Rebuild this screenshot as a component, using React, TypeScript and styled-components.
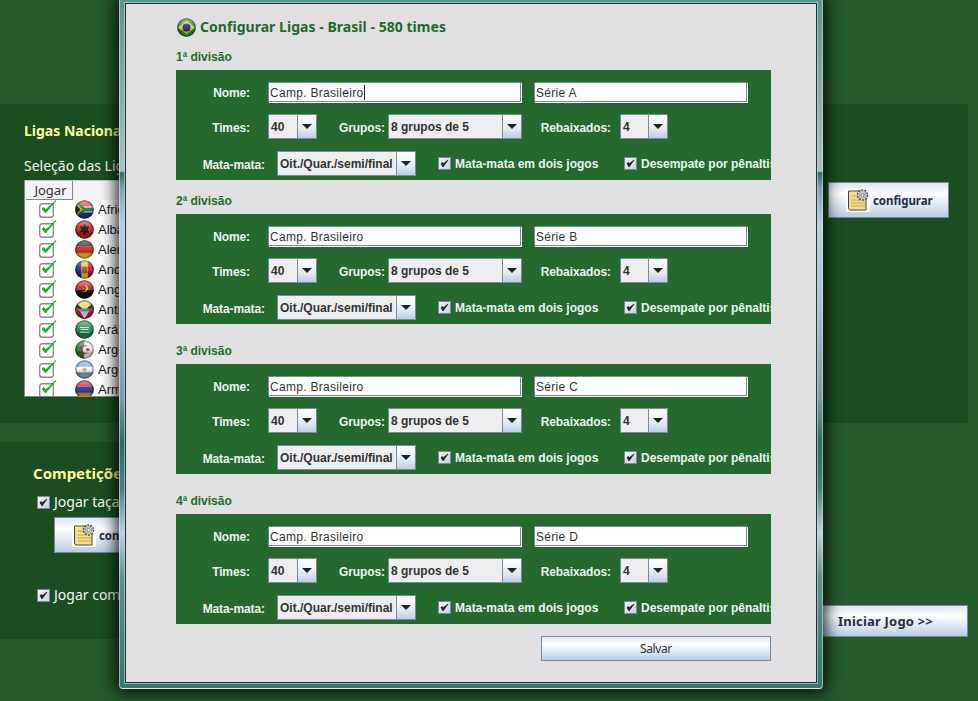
import React, { useId } from 'react';
import styled, { createGlobalStyle } from 'styled-components';

const Global = createGlobalStyle`
  html, body { margin: 0; padding: 0; background: #255a2b; }
  body { font-family: "Noto Sans", "Liberation Sans", sans-serif; }
`;

const metal = 'linear-gradient(180deg, #dce7f2 0%, #ffffff 32%, #f4f8fb 42%, #dbe6f1 68%, #b9cde2 100%)';

const Page = styled.div`
  position: relative;
  width: 978px;
  height: 701px;
  overflow: hidden;
  background: #255a2b;
  padding-top: 104px;
  box-sizing: border-box;
`;
const LeaguesPanel = styled.section`
  width: 968px;
  height: 319px;
  background: #1b4d20;
  box-sizing: border-box;
  padding: 18px 19px 0 24px;
  display: flex;
  justify-content: space-between;
`;
const LeaguesColumn = styled.div`
  width: 780px;
  display: flex;
  flex-direction: column;
`;
const PanelTitle = styled.h2`
  margin: 0;
  font: bold 14px/18px "Noto Sans", sans-serif;
  color: #ffff99;
`;
const PlainText = styled.div`
  margin-top: 16px;
  font: 14px/20px "Noto Sans", sans-serif;
  color: #f2f8f2;
`;
const ConfigureSide = styled.div`
  padding-top: 60px;
`;
const IconButton = styled.button`
  width: 121px;
  height: 36px;
  padding: 0 0 0 17px;
  display: flex;
  align-items: center;
  border: 1px solid #7a8a99;
  background: ${metal};
  font: bold 11.5px "Noto Sans", sans-serif;
  letter-spacing: -0.05px;
  color: #2a2a40;
`;
const Table = styled.div`
  margin-top: 4px;
  width: 780px;
  height: 217px;
  overflow: hidden;
  background: #fff;
  border-left: 1px solid #7a8a99;
  border-bottom: 1px solid #7a8a99;
  box-sizing: border-box;
  color: #16162a;
`;
const TableHead = styled.div`
  height: 20px;
  display: flex;
  background: #f4f4f6;
  box-sizing: border-box;
  border-top: 1px solid #c8ccd2;
`;
const HeadCell = styled.div`
  width: 47px;
  margin-left: 1px;
  height: 19px;
  box-sizing: border-box;
  border-right: 1px solid #7a8a99;
  border-bottom: 1px solid #7a8a99;
  padding-left: 3px;
  text-align: center;
  font: 13px/18px "Noto Sans", sans-serif;
  color: #333;
`;
const TableRow = styled.div`
  height: 20px;
  display: flex;
  align-items: flex-start;
  font: 13px/19px "Liberation Sans", sans-serif;
`;
const CheckCell = styled.div`
  width: 50px;
  box-sizing: border-box;
  padding-left: 13px;
  display: flex;
`;
const FlagCell = styled.div`
  width: 23px;
  display: flex;
`;
const CompetitionRow = styled.div`
  display: flex;
`;
const CompetitionPanel = styled.section`
  margin-top: 19px;
  width: 800px;
  height: 197px;
  background: #1b4d20;
  box-sizing: border-box;
  padding: 22px 0 0 33px;
`;
const CompetitionTitle = styled(PanelTitle)`
  font-size: 15px;
`;
const CompetitionCheck = styled.label<{ $top: number }>`
  display: flex;
  align-items: center;
  gap: 4px;
  margin: ${p => p.$top}px 0 0 4px;
  font: 14px/18px "Noto Sans", sans-serif;
  color: #f2f8f2;
  height: 18px;
`;
const CompetitionButton = styled(IconButton)`
  margin: 6px 0 0 21px;
  height: 36px;
`;
const StartSide = styled.div`
  display: flex;
  align-items: flex-end;
  padding: 0 0 2px 20px;
  margin-top: 19px;
`;
const StartButton = styled.button`
  width: 148px;
  height: 32px;
  border: 1px solid #7a8a99;
  background: ${metal};
  padding: 0 0 0 17px;
  text-align: left;
  font: bold 13px "Noto Sans", sans-serif;
  letter-spacing: 0.2px;
  color: #2b2b3a;
`;

const Dialog = styled.div`
  position: absolute;
  left: 119px;
  top: -3px;
  width: 704px;
  height: 692px;
  box-sizing: border-box;
  padding: 5px;
  border: 1px solid rgba(225, 238, 238, 0.55);
  border-bottom-color: #dfeaea;
  border-radius: 4px;
  box-shadow: 0 0 16px 3px rgba(0, 0, 0, 0.88);
  background: linear-gradient(180deg, #5f928d 0, #a9c0c0 173px, #2f6a66 175px, #7ea3b0 190px, #b8cde0 225px, #a9c2da 300px, #7a9aa8 400px, #2f6a66 445px, #4a7f7d 490px, #bcd2e6 535px, #5f8f8f 580px, #38786f 680px);
`;
const DialogBody = styled.div`
  height: 100%;
  box-sizing: border-box;
  border: 1px solid #1f3030;
  box-shadow: 0 0 0 1px rgba(205, 225, 225, 0.6);
  background: #e0e0e3;
  padding: 12px 44px 0 50px;
`;
const DialogTitle = styled.h1`
  margin: 0 0 12px 1px;
  height: 22px;
  display: flex;
  align-items: center;
  gap: 4px;
  font: bold 14px/22px "Noto Sans", sans-serif;
  letter-spacing: 0.04px;
  color: #1e6a2e;
`;
const Divisions = styled.div`
  display: flex;
  flex-direction: column;
`;
const DivisionTitle = styled.div<{ $gap: number }>`
  margin-top: ${p => p.$gap}px;
  height: 20px;
  font: bold 12px/14px "Liberation Sans", sans-serif;
  color: #1f6b2b;
`;
const DivisionCard = styled.div`
  width: 595px;
  height: 110px;
  overflow: hidden;
  background: #26692e;
  box-sizing: border-box;
  padding-top: 11px;
  display: flex;
  flex-direction: column;
`;
const FormRow = styled.div<{ $h: number; $top?: number }>`
  display: flex;
  align-items: center;
  height: ${p => p.$h}px;
  margin-top: ${p => p.$top ?? 0}px;
  white-space: nowrap;
`;
const FieldLabel = styled.label<{ $w: number; $gap: number }>`
  width: ${p => p.$w}px;
  margin-right: ${p => p.$gap}px;
  flex: none;
  padding-top: 2px;
  text-align: right;
  font: bold 12px "Liberation Sans", sans-serif;
  letter-spacing: -0.1px;
  color: #e8f5ee;
`;
const TextInput = styled.div<{ $w: number; $gap?: number }>`
  width: ${p => p.$w - 1}px;
  margin-right: ${p => (p.$gap ?? 0) + 1}px;
  height: 20px;
  flex: none;
  box-sizing: border-box;
  background: #fff;
  border: 1px solid #7a8a99;
  box-shadow: 1px 1px 0 #fff;
  padding-left: 1px;
  font: 12px/20px "Liberation Sans", sans-serif;
  letter-spacing: 0.3px;
  color: #333;
  display: flex;
`;
const Caret = styled.span`
  width: 1px;
  height: 15px;
  margin-top: 2px;
  background: #222;
`;
const Combo = styled.div<{ $w: number }>`
  width: ${p => p.$w}px;
  height: 25px;
  flex: none;
  display: flex;
  box-sizing: border-box;
  border: 1px solid #7a8a99;
  background: #eeeef0;
`;
const ComboValue = styled.div`
  flex: 1;
  min-width: 0;
  padding-left: 2px;
  font: bold 12px/24px "Liberation Sans", sans-serif;
  color: #333;
`;
const ComboArrow = styled.div`
  width: 19px;
  flex: none;
  box-sizing: border-box;
  border-left: 1px solid #7a8a99;
  background: linear-gradient(180deg, #ffffff 0%, #eef3f8 40%, #d9e4ef 70%, #bccfe3 100%);
  display: flex;
  align-items: center;
  justify-content: center;
  &::after {
    content: '';
    width: 0;
    height: 0;
    border-left: 5px solid transparent;
    border-right: 5px solid transparent;
    border-top: 5px solid #222;
  }
`;
const CheckField = styled.div<{ $left: number; $w?: number }>`
  margin-left: ${p => p.$left}px;
  width: ${p => (p.$w ? `${p.$w}px` : 'auto')};
  flex: none;
  display: flex;
  align-items: center;
  gap: 4px;
  font: bold 12px "Liberation Sans", sans-serif;
  color: #e8f5ee;
`;
const Box = styled.span`
  width: 13px;
  height: 13px;
  flex: none;
  box-sizing: border-box;
  border: 1px solid #7a8a99;
  background: linear-gradient(135deg, #f4f6f9, #c3d2e2);
  display: flex;
  align-items: center;
  justify-content: center;
`;
const DialogFooter = styled.div`
  width: 595px;
  display: flex;
  justify-content: flex-end;
  margin-top: 12px;
`;
const SaveButton = styled.button`
  width: 230px;
  height: 25px;
  border: 1px solid #7a8a99;
  background: ${metal};
  padding: 0;
  font: 12px "Noto Sans", sans-serif;
  letter-spacing: -0.4px;
  color: #333;
`;

const TinyCheck = () => (
  <Box>
    <svg width="9" height="9" viewBox="0 0 9 9">
      <path d="M1 4.5 L3 8 L8 1 L3.2 4.8 L2.4 3.6 Z" fill="#222" stroke="#222" strokeWidth="0.8" />
    </svg>
  </Box>
);

const GreenCheck = () => (
  <svg width="20" height="18" viewBox="0 0 20 18" style={{ display: 'block' }}>
    <rect x="1.7" y="3.7" width="13.6" height="13.6" rx="2.5" fill="#fff" stroke="#8b8b8b" strokeWidth="1.4" />
    <path d="M4 9 L7.5 13 L18 0.5 L7.8 9.6 L5.6 7.6 Z" fill="#16b82c" stroke="#10a024" strokeWidth="0.8" />
  </svg>
);

const ConfigIcon = () => (
  <svg width="24" height="24" viewBox="0 0 24 24" style={{ display: 'block', flex: 'none' }}>
    <rect width="24" height="24" fill="#fff" />
    <path d="M2.5 3 H15 V6 H20 V22 H5 Q2.5 22 2.5 20 Z" fill="#f3dd96" stroke="#4d4630" strokeWidth="1" />
    <path d="M5 8 H12 M5 12 H14 M5 15 H19 M5 18 H19" stroke="#d6bd63" strokeWidth="1.6" />
    <circle cx="16.5" cy="7" r="5" fill="#e6e6e6" stroke="#555" strokeWidth="1.6" strokeDasharray="2 1.1" />
    <circle cx="16.5" cy="7" r="3.4" fill="#d8d8d8" stroke="#777" strokeWidth=".6" />
    <circle cx="16.5" cy="7" r="1.6" fill="#fff" stroke="#555" strokeWidth=".7" />
  </svg>
);

type FlagName = 'za' | 'al' | 'de' | 'ad' | 'ao' | 'ag' | 'sa' | 'dz' | 'ar' | 'am' | 'br';

const flagArt: Record<FlagName, React.ReactNode> = {
  za: (
    <>
      <rect width="20" height="7" fill="#d8412f" />
      <rect y="13" width="20" height="7" fill="#1d2f8f" />
      <rect y="7" width="20" height="6" fill="#fff" />
      <path d="M0 0 L10 8 H20 V12 H10 L0 20 Z" fill="#14803c" />
      <path d="M0 3 L7 10 L0 17 Z" fill="#111" stroke="#f5c518" strokeWidth="1.2" />
    </>
  ),
  al: (
    <>
      <rect width="20" height="20" fill="#c8201e" />
      <path d="M10 4 L12 7 L15 6 L13.5 10 L15 13 L11.5 13 L10 17 L8.5 13 L5 13 L6.5 10 L5 6 L8 7 Z" fill="#1a1212" />
    </>
  ),
  de: (
    <>
      <rect width="20" height="7" fill="#222" />
      <rect y="7" width="20" height="6.5" fill="#d0201e" />
      <rect y="13.5" width="20" height="6.5" fill="#f3c51f" />
    </>
  ),
  ad: (
    <>
      <rect width="7" height="20" fill="#1c2f96" />
      <rect x="7" width="6.5" height="20" fill="#f2c71c" />
      <rect x="13.5" width="6.5" height="20" fill="#d21034" />
      <rect x="7.5" y="7" width="5.5" height="6.5" fill="#b04a22" />
    </>
  ),
  ao: (
    <>
      <rect width="20" height="10" fill="#d5161f" />
      <rect y="10" width="20" height="10" fill="#0c0c0c" />
      <path d="M6.5 12 Q11 15 14 9 Q13 5 10 5 Q13 8 11 11 Q9 13 6.5 12Z" fill="#f4c510" />
      <path d="M8 8 L9 9 L10 8 L9.6 9.5 L8.6 9.5 Z" fill="#f4c510" />
    </>
  ),
  ag: (
    <>
      <rect width="20" height="20" fill="#111" />
      <path d="M3 0 H17 V5 L10 11 L3 5 Z" fill="#f4d35c" />
      <path d="M1 9 H19 L10 20 Z" fill="#4a7ab8" />
      <path d="M5 12 H15 L10 20 Z" fill="#eef1f5" />
      <path d="M0 4 L10 20 H0Z M20 4 L10 20 H20Z" fill="#c8232b" />
    </>
  ),
  sa: (
    <>
      <rect width="20" height="20" fill="#1d8a55" />
      <path d="M5 8 H15 M6 10 H14" stroke="#dfeee6" strokeWidth="1" />
      <path d="M5 13 H15" stroke="#eef5f0" strokeWidth="1.2" />
    </>
  ),
  dz: (
    <>
      <rect width="10" height="20" fill="#1e8040" />
      <rect x="10" width="10" height="20" fill="#f1f1f1" />
      <circle cx="10.5" cy="10" r="4.6" fill="#d21034" />
      <circle cx="11.8" cy="10" r="3.7" fill="#f1f1f1" />
      <circle cx="13.5" cy="10" r="1.7" fill="#d21034" />
    </>
  ),
  ar: (
    <>
      <rect width="20" height="20" fill="#fff" />
      <rect width="20" height="7" fill="#78aede" />
      <rect y="13" width="20" height="7" fill="#78aede" />
      <circle cx="10" cy="10" r="2.2" fill="#eeb43a" />
    </>
  ),
  am: (
    <>
      <rect width="20" height="7" fill="#d1202a" />
      <rect y="7" width="20" height="6.5" fill="#1f35a0" />
      <rect y="13.5" width="20" height="6.5" fill="#e99e1b" />
    </>
  ),
  br: (
    <>
      <rect width="20" height="20" fill="#1e9a44" />
      <path d="M1 10 L10 3 L19 10 L10 17Z" fill="#f3d41c" />
      <circle cx="10" cy="10" r="4.2" fill="#1e2f88" />
    </>
  ),
};

const Flag = ({ name }: { name: FlagName }) => {
  const id = useId().replace(/[^a-zA-Z0-9]/g, '');
  return (
    <svg width="19" height="19" viewBox="0 0 20 20" style={{ display: 'block', flex: 'none' }}>
      <defs>
        <clipPath id={`c${id}`}><circle cx="10" cy="10" r="9.8" /></clipPath>
        <linearGradient id={`g${id}`} x1="0" y1="0" x2="0" y2="1">
          <stop offset="0" stopColor="#fff" stopOpacity=".6" />
          <stop offset=".42" stopColor="#fff" stopOpacity=".08" />
          <stop offset=".68" stopColor="#000" stopOpacity=".3" />
          <stop offset="1" stopColor="#000" stopOpacity=".1" />
        </linearGradient>
        <radialGradient id={`r${id}`} cx=".5" cy=".5" r=".5">
          <stop offset=".72" stopColor="#000" stopOpacity="0" />
          <stop offset="1" stopColor="#000" stopOpacity=".55" />
        </radialGradient>
      </defs>
      <g clipPath={`url(#c${id})`}>
        {flagArt[name]}
        <rect width="20" height="20" fill={`url(#g${id})`} />
        <rect width="20" height="20" fill={`url(#r${id})`} />
      </g>
    </svg>
  );
};

const countries: [FlagName, string][] = [
  ['za', 'Africa do Sul'],
  ['al', 'Albânia'],
  ['de', 'Alemanha'],
  ['ad', 'Andorra'],
  ['ao', 'Angola'],
  ['ag', 'Antígua e Barbuda'],
  ['sa', 'Arábia Saudita'],
  ['dz', 'Argélia'],
  ['ar', 'Argentina'],
  ['am', 'Armênia'],
];

const divisions = [
  { title: '1ª divisão', serie: 'Série A', gap: 0, caret: true },
  { title: '2ª divisão', serie: 'Série B', gap: 14, caret: false },
  { title: '3ª divisão', serie: 'Série C', gap: 20, caret: false },
  { title: '4ª divisão', serie: 'Série D', gap: 20, caret: false },
];

const Select = ({ w, value }: { w: number; value: string }) => (
  <Combo $w={w}>
    <ComboValue>{value}</ComboValue>
    <ComboArrow />
  </Combo>
);

export default function App() {
  return (
    <Page>
      <Global />
      <LeaguesPanel>
        <LeaguesColumn>
          <PanelTitle>Ligas Nacionais</PanelTitle>
          <PlainText>Seleção das Ligas</PlainText>
          <Table>
            <TableHead><HeadCell>Jogar</HeadCell></TableHead>
            {countries.map(([code, name]) => (
              <TableRow key={code}>
                <CheckCell><GreenCheck /></CheckCell>
                <FlagCell><Flag name={code} /></FlagCell>
                {name}
              </TableRow>
            ))}
          </Table>
        </LeaguesColumn>
        <ConfigureSide>
          <IconButton><ConfigIcon />&nbsp;configurar</IconButton>
        </ConfigureSide>
      </LeaguesPanel>
      <CompetitionRow>
        <CompetitionPanel>
          <CompetitionTitle>Competições</CompetitionTitle>
          <CompetitionCheck $top={11}><TinyCheck />Jogar taças continentais</CompetitionCheck>
          <CompetitionButton><ConfigIcon />&nbsp;configurar</CompetitionButton>
          <CompetitionCheck $top={33}><TinyCheck />Jogar competições</CompetitionCheck>
        </CompetitionPanel>
        <StartSide>
          <StartButton>Iniciar Jogo &gt;&gt;</StartButton>
        </StartSide>
      </CompetitionRow>

      <Dialog>
        <DialogBody>
          <DialogTitle><Flag name="br" />Configurar Ligas - Brasil - 580 times</DialogTitle>
          <Divisions>
            {divisions.map(d => (
              <React.Fragment key={d.title}>
                <DivisionTitle $gap={d.gap}>{d.title}</DivisionTitle>
                <DivisionCard>
                  <FormRow $h={21}>
                    <FieldLabel $w={74} $gap={18}>Nome:</FieldLabel>
                    <TextInput $w={254} $gap={12}>Camp. Brasileiro{d.caret && <Caret />}</TextInput>
                    <TextInput $w={214}>{d.serie}</TextInput>
                  </FormRow>
                  <FormRow $h={25} $top={12}>
                    <FieldLabel $w={74} $gap={18}>Times:</FieldLabel>
                    <Select w={49} value="40" />
                    <FieldLabel $w={68} $gap={3}>Grupos:</FieldLabel>
                    <Select w={134} value="8 grupos de 5" />
                    <FieldLabel $w={89} $gap={9}>Rebaixados:</FieldLabel>
                    <Select w={48} value="4" />
                  </FormRow>
                  <FormRow $h={25} $top={12}>
                    <FieldLabel $w={89} $gap={12}>Mata-mata:</FieldLabel>
                    <Select w={139} value="Oit./Quar./semi/final" />
                    <CheckField $left={22} $w={186}><TinyCheck />Mata-mata em dois jogos</CheckField>
                    <CheckField $left={0}><TinyCheck />Desempate por pênaltis</CheckField>
                  </FormRow>
                </DivisionCard>
              </React.Fragment>
            ))}
          </Divisions>
          <DialogFooter><SaveButton>Salvar</SaveButton></DialogFooter>
        </DialogBody>
      </Dialog>
    </Page>
  );
}
